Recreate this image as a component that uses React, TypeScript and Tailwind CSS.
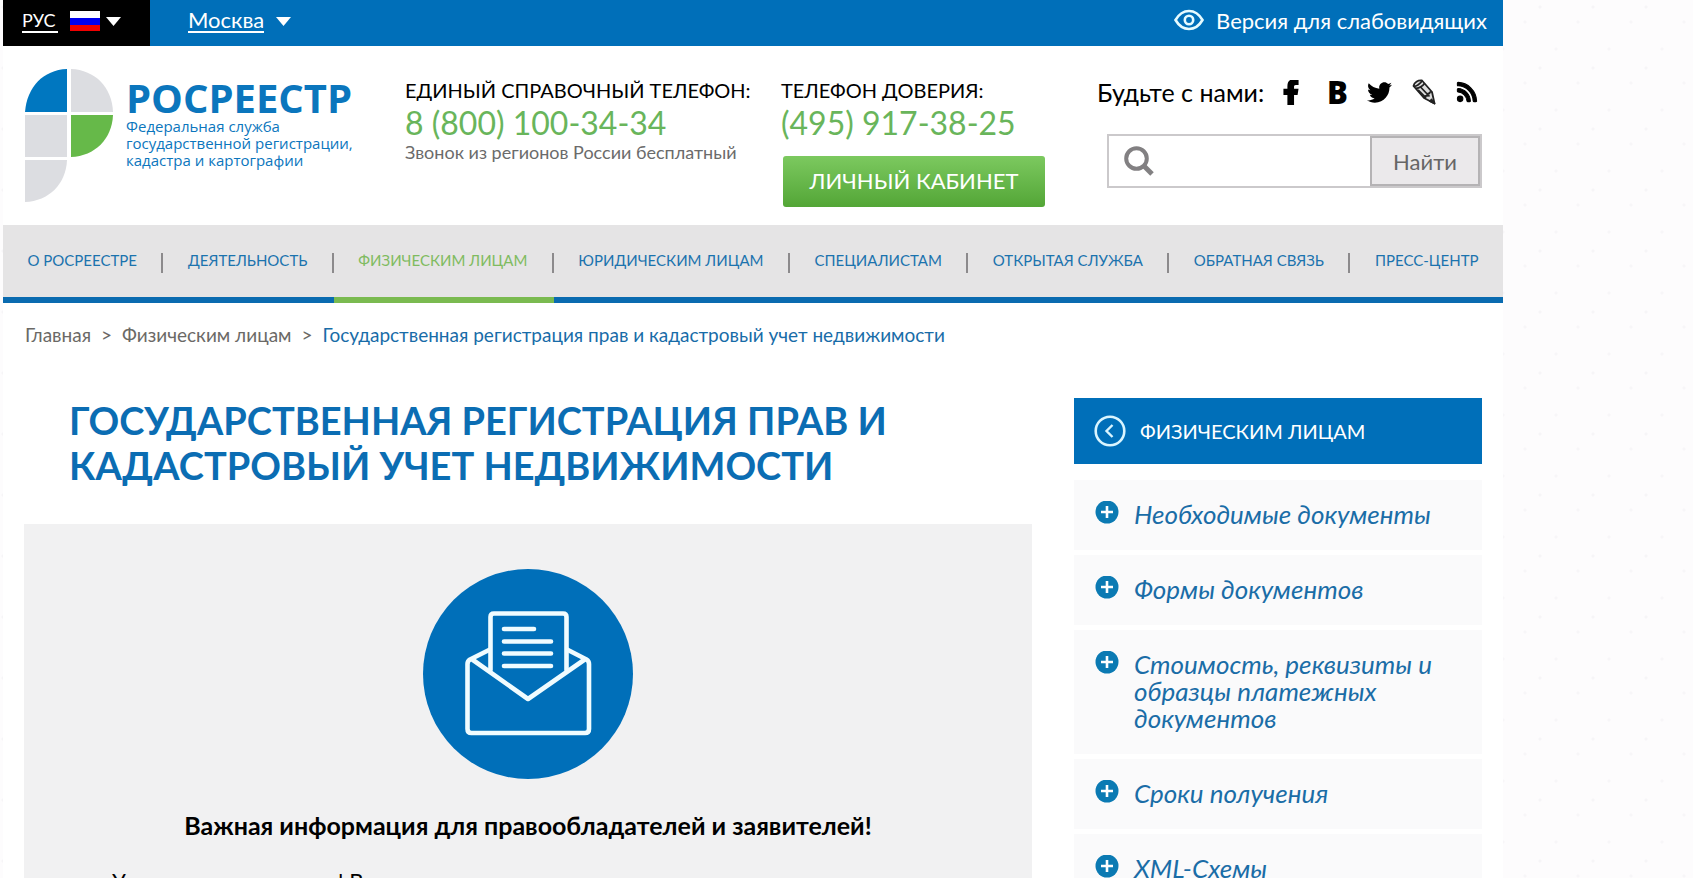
import { FaFacebookF, FaTwitter, FaRss } from "react-icons/fa";

const nav = [
  "О РОСРЕЕСТРЕ",
  "ДЕЯТЕЛЬНОСТЬ",
  "ФИЗИЧЕСКИМ ЛИЦАМ",
  "ЮРИДИЧЕСКИМ ЛИЦАМ",
  "СПЕЦИАЛИСТАМ",
  "ОТКРЫТАЯ СЛУЖБА",
  "ОБРАТНАЯ СВЯЗЬ",
  "ПРЕСС-ЦЕНТР",
];

const activeNav = "ФИЗИЧЕСКИМ ЛИЦАМ";

const sections = [
  "Необходимые документы",
  "Формы документов",
  "Стоимость, реквизиты и образцы платежных документов",
  "Сроки получения",
  "XML-Схемы",
];

function Caret() {
  return (
    <svg width="15" height="9" viewBox="0 0 15 9" aria-hidden="true">
      <path d="M0 0h15L7.5 9z" fill="#fff" />
    </svg>
  );
}

function TopBar() {
  return (
    <div className="flex h-[46px] items-stretch bg-[#006fb9] text-white">
      <button type="button" className="flex w-[147px] items-center bg-black pb-1 pl-[19px] text-lg">
        <span className="w-9 border-b-2 border-white text-left leading-[22px]">РУС</span>
        <svg className="mr-1.5 ml-3" width="30" height="20" viewBox="0 0 30 20" aria-hidden="true">
          <path d="M0 0h30v7H0z" fill="#fff" />
          <path d="M0 7h30v7H0z" fill="#0000f0" />
          <path d="M0 14h30v6H0z" fill="#f00000" />
        </svg>
        <Caret />
      </button>
      <button type="button" className="flex items-center gap-3 pb-1 pl-[38px] text-[22px]">
        <span className="border-b-2 border-white leading-[22px]">Москва</span>
        <Caret />
      </button>
      <a href="#" className="ml-auto flex items-center gap-3 pr-4 pb-1.5 text-[22px]">
        <svg width="30" height="22" viewBox="0 0 30 22" fill="none" stroke="#e6fbff" aria-hidden="true">
          <path d="M1.500 11C5 5 9.500 2 15 2s10 3 13.500 9C25 17 20.500 20 15 20S5 17 1.500 11z" strokeWidth="2.600" />
          <circle cx="15" cy="11" r="4.200" strokeWidth="2.600" />
        </svg>
        Версия для слабовидящих
      </a>
    </div>
  );
}

function Logo() {
  return (
    <a href="#" className="flex w-[332px] shrink-0 gap-3 text-[#0b76bd]">
      <svg className="shrink-0" width="89" height="133" viewBox="0 0 89 133" aria-hidden="true">
        <path d="M42 0v43H0C2 18 18 1 42 0z" fill="#0077c0" />
        <path d="M46 0c24 1 41 18 42 43H46z" fill="#dcdde1" />
        <path d="M0 46h42v42H0z" fill="#dcdde1" />
        <path d="M46 46h42c-1 24-18 41-42 42z" fill="#66b949" />
        <path d="M0 91h42c-1 24-18 41-42 42z" fill="#dcdde1" />
      </svg>
      <div className="pt-2 font-['Open_Sans','Noto_Sans',sans-serif] whitespace-nowrap">
        <div className="text-[40px] leading-[41px] font-bold">РОСРЕЕСТР</div>
        <p className="text-[15px] leading-[17px] font-medium">
          Федеральная служба
          <br />
          государственной регистрации,
          <br />
          кадастра и картографии
        </p>
      </div>
    </a>
  );
}

function Social() {
  return (
    <div className="flex items-center justify-between pr-1 text-black">
      <span className="text-[25px] leading-8">Будьте с нами:</span>
      <div className="flex items-center gap-5">
        <a href="#" aria-label="Facebook" className="w-6">
          <FaFacebookF className="w-4" size={25} strokeWidth={36} />
        </a>
        <a href="#" aria-label="ВКонтакте" className="w-5 text-center font-['Noto_Sans',sans-serif] text-[31px] leading-8 font-black">B</a>
        <a href="#" aria-label="Twitter"><FaTwitter size={25} /></a>
        <a href="#" aria-label="Живой журнал">
          <svg width="24" height="26" viewBox="0 0 24 26" fill="none" stroke="#222" strokeWidth="1.800" strokeLinejoin="round">
            <path d="M1.500 7C2 3.500 6 1 10 1.500L20 13l2.500 11.500L12 19z" fill="#ddd" />
            <path d="M1.500 7C3 8 9 5 10 1.500M4 9.500C7 9 11 6.500 12.500 4.500M6 11l8 8M9 8.500l8.500 9M12 19c0-2 1.500-2.500 3-2 0-2.500 1-3 2.500-2.500 0-1.500 1-2 2.500-1.500" />
            <path d="M19.500 20.500l3 4-4.500-2.200z" fill="#222" />
          </svg>
        </a>
        <a href="#" aria-label="RSS"><FaRss size={22} strokeWidth={24} /></a>
      </div>
    </div>
  );
}

function Search() {
  return (
    <form className="mt-[26px] ml-2.5 flex h-[54px] border-2 border-[#cbc9cb] bg-white" onSubmit={(e) => e.preventDefault()}>
      <label htmlFor="search" className="flex items-center pl-[15px]" aria-label="Поиск">
        <svg width="30" height="30" viewBox="0 0 30 30" fill="none" stroke="#828082" aria-hidden="true">
          <circle cx="12.500" cy="12.500" r="10.300" strokeWidth="4" />
          <path d="M20 20l8 8" strokeWidth="5" />
        </svg>
      </label>
      <input id="search" type="text" className="min-w-0 flex-1 px-3 text-xl outline-none" />
      <button type="submit" className="w-[110px] border-2 border-[#b5b3b5] bg-[#ebe9eb] text-[22px] text-[#666]">
        Найти
      </button>
    </form>
  );
}

function Header() {
  return (
    <header className="flex h-[179px] pt-[23px] pr-[21px] pl-[22px]">
      <Logo />
      <div className="ml-12 w-[376px] shrink-0 pt-[7px] whitespace-nowrap">
        <div className="text-xl leading-7 text-black">ЕДИНЫЙ СПРАВОЧНЫЙ ТЕЛЕФОН:</div>
        <div className="text-[32px] leading-[38px] text-[#69b55b]">8 (800) 100-34-34</div>
        <div className="text-lg leading-5 text-[#6b6b6b]">Звонок из регионов России бесплатный</div>
      </div>
      <div className="shrink-0 pt-[7px] whitespace-nowrap">
        <div className="text-xl leading-7 text-black">ТЕЛЕФОН ДОВЕРИЯ:</div>
        <div className="text-[32px] leading-[38px] text-[#69b55b]">(495) 917-38-25</div>
        <button
          type="button"
          className="mt-3.5 ml-0.5 h-[51px] w-[262px] rounded-[3px] bg-linear-to-b from-[#7cc95f] to-[#53a636] pb-0.5 text-[22px] text-white"
        >
          ЛИЧНЫЙ КАБИНЕТ
        </button>
      </div>
      <div className="ml-auto w-[385px] pt-[7px]">
        <Social />
        <Search />
      </div>
    </header>
  );
}

function Nav() {
  return (
    <nav className="flex h-[78px] bg-[#e5e4e5] text-[15px] whitespace-nowrap text-[#1b73ae]">
      {nav.map((item, i) => (
        <a
          key={item}
          href="#"
          className={`flex flex-auto items-center border-b-6 ${
            item === activeNav ? "border-[#7aba50] text-[#7fbb60]" : "border-[#0a6bb0]"
          }`}
        >
          <span className="flex-1 pb-0.5 text-center">{item}</span>
          {i < nav.length - 1 && <span className="mt-1 h-5 w-0.5 bg-[#8c8a8c]" />}
        </a>
      ))}
    </nav>
  );
}

function Breadcrumbs() {
  return (
    <div className="flex gap-2.5 pt-[18px] pl-[22px] text-[19px] leading-7 text-[#6b6966]">
      <a href="#">Главная</a>
      <span>&gt;</span>
      <a href="#">Физическим лицам</a>
      <span>&gt;</span>
      <span className="text-[#186ca8]">Государственная регистрация прав и кадастровый учет недвижимости</span>
    </div>
  );
}

function Envelope() {
  return (
    <svg className="mx-auto" width="210" height="210" viewBox="0 0 210 210" fill="none" aria-hidden="true">
      <circle cx="105" cy="105" r="105" fill="#006fb9" />
      <g stroke="#f0fcff" strokeWidth="4.600" strokeLinecap="round" strokeLinejoin="round">
        <path d="M67.500 101V48q0-3.500 3.500-3.500h69q3.500 0 3.500 3.500v53" />
        <path d="M81 60h30M81 72.500h47M81 84.500h47M81 97h47" />
        <path d="M66 81L47 90.500Q44.500 92 44.500 95v65q0 4 4 4H162q4 0 4-4V95q0-3-2.500-4.500L145 81" />
        <path d="M50 91l55 39 56-39" />
      </g>
    </svg>
  );
}

function Sidebar() {
  return (
    <aside className="w-[408px] shrink-0">
      <a href="#" className="flex h-[66px] items-center gap-3.5 bg-[#006fb9] pl-5 text-xl text-white">
        <svg width="32" height="32" viewBox="0 0 32 32" fill="none" stroke="#d9f5ff" aria-hidden="true">
          <circle cx="16" cy="16" r="14.300" strokeWidth="2.600" />
          <path d="M18.500 10L12.500 16l6 6" strokeWidth="2.400" />
        </svg>
        ФИЗИЧЕСКИМ ЛИЦАМ
      </a>
      <ul className="mt-4 flex flex-col gap-[5px]">
        {sections.map((item) => (
          <li key={item}>
            <a href="#" className="flex gap-[15px] bg-[#fafafb] pt-[21px] pr-5 pb-[22px] pl-[21px] text-[26px] leading-[27px] text-[#1a6da7] italic">
              <svg className="shrink-0" width="24" height="24" viewBox="0 0 24 24" aria-hidden="true">
                <circle cx="12" cy="11" r="11.500" fill="#0b7ab3" />
                <path d="M12 5v12M6 11h12" stroke="#fff" strokeWidth="2.600" />
              </svg>
              <span>{item}</span>
            </a>
          </li>
        ))}
      </ul>
    </aside>
  );
}

export default function App() {
  return (
    <div className="h-screen overflow-hidden bg-[#fdfcfd] bg-[radial-gradient(circle_at_3px_7px,#f6f5f7_1px,transparent_2px),radial-gradient(circle_at_41px_22px,#f7f6f8_1px,transparent_2px),radial-gradient(circle_at_19px_49px,#f7f6f8_1px,transparent_2px)] bg-size-[53px_61px] pl-[3px] font-[Lato,Carlito,'Open_Sans',sans-serif]">
      <div className="min-h-full max-w-[1500px] bg-white">
        <TopBar />
        <Header />
        <Nav />
        <Breadcrumbs />
        <div className="flex gap-[42px] pt-[49px] pr-[21px] pl-[21px]">
          <main className="min-w-0 flex-1">
            <h1 className="pr-24 pl-[45px] text-[38px] leading-[45px] font-bold text-[#0b6db3]">
              ГОСУДАРСТВЕННАЯ РЕГИСТРАЦИЯ ПРАВ И КАДАСТРОВЫЙ УЧЕТ НЕДВИЖИМОСТИ
            </h1>
            <section className="mt-9 bg-[#f1f1f2] px-[88px] pt-[45px] pb-10 text-black">
              <Envelope />
              <h2 className="mt-[30px] text-center text-[25px] leading-8 font-bold">
                Важная информация для правообладателей и заявителей!
              </h2>
              <p className="mt-6 text-[22px] leading-8">Уважаемые заявители! В</p>
            </section>
          </main>
          <Sidebar />
        </div>
      </div>
    </div>
  );
}
